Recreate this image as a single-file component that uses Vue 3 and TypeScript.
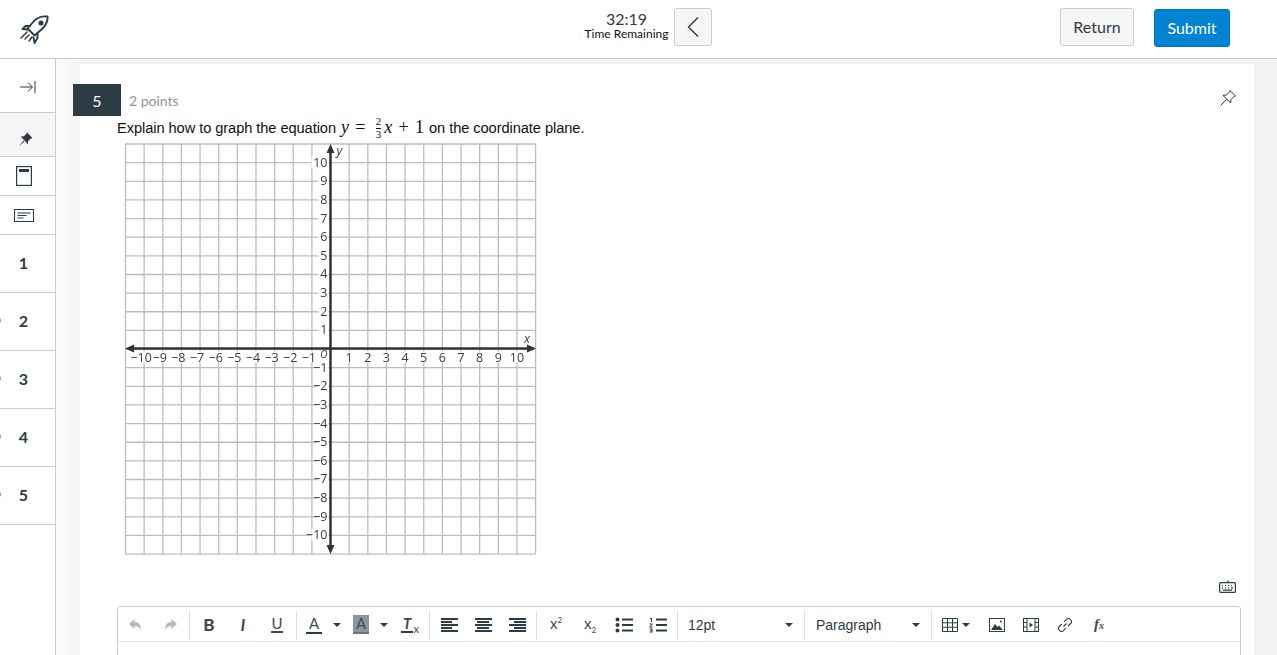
<script setup lang="ts">
const questions = [1, 2, 3, 4, 5]

// graph paper
const cell = 18.64
const cx = 205.5
const cy = 204.5
const steps = Array.from({ length: 23 }, (_, i) => i * cell)
const xLabels = [-10, -9, -8, -7, -6, -5, -4, -3, -2, -1, 1, 2, 3, 4, 5, 6, 7, 8, 9, 10]
const yLabels = [10, 9, 8, 7, 6, 5, 4, 3, 2, 1, -1, -2, -3, -4, -5, -6, -7, -8, -9, -10]
const label = (n: number) => (n < 0 ? `\u2212${-n}` : `${n}`)
</script>

<template>
  <div class="page">
    <header class="topbar">
      <svg class="rocket" width="30" height="30" viewBox="0 0 30 30" fill="none" stroke="#2d3b45" stroke-width="1.9" stroke-linejoin="round" stroke-linecap="round">
        <path d="M28.500 1.500c-5-.6-10 1-13.500 4.500L8.500 13.500l7 7 7.500-6.500c3.500-3.500 6-8.500 5.500-12.500z" />
        <path d="M11 11H6.500L3.500 14l5 .5M18.500 18.500V23l-3 5-1-5.500" />
        <circle cx="22" cy="8" r="1.600" fill="#2d3b45" />
        <path d="M8 17l-6 6M10 20l-4 4M13 22l-3 4" stroke-width="1.500" />
      </svg>
      <div class="timer">
        <div class="timer-text">
          <div class="clock">32:19</div>
          <div class="clock-label">Time Remaining</div>
        </div>
        <button class="btn chevron">
          <svg width="14" height="22" viewBox="0 0 14 22" fill="none" stroke="#2d3b45" stroke-width="1.400"><path d="M12 1.500 2.500 11 12 20.500" /></svg>
        </button>
      </div>
      <div class="actions">
        <button class="btn return">Return</button>
        <button class="btn submit">Submit</button>
      </div>
    </header>

    <div class="body">
      <aside class="sidebar">
        <div class="side-row collapse">
          <svg width="16" height="12" viewBox="0 0 16 12" fill="none" stroke="#2d3b45" stroke-width="1"><path d="M0 6h12M8 1.500 12.500 6 8 10.500M15 0v12" /></svg>
        </div>
        <div class="side-row pinned">
          <svg width="15" height="15" viewBox="0 0 14 14" fill="#2d3b45"><path d="M8.500 .5 13.500 5.500l-1.500.5-2.500 2.500-.3 3L2.500 4.300l3-.3L8 1.500zM5.200 8 1 13l5-4.200z" /></svg>
        </div>
        <div class="side-row icon-row first">
          <svg width="16" height="20" viewBox="0 0 16 20" fill="none" stroke="#2d3b45" stroke-width="1.200"><rect x=".6" y=".6" width="14.800" height="18.800" /><rect x="3" y="3" width="10" height="3" fill="#2d3b45" stroke="none" /></svg>
        </div>
        <div class="side-row icon-row">
          <svg width="20" height="13" viewBox="0 0 20 13" fill="none" stroke="#2d3b45" stroke-width="1"><rect x=".5" y=".5" width="19" height="12" /><path d="M3.500 4h13M3.500 6.500h9M3.500 9h6" /></svg>
        </div>
        <div v-for="q in questions" :key="q" class="side-row num">
          <i v-if="q > 1" class="dot"></i>
          {{ q }}
        </div>
      </aside>

      <main class="main">
        <section class="card">
          <div class="card-head">
            <div class="badge">5</div>
            <span class="points">2 points</span>
            <svg class="pin" width="18" height="18" viewBox="0 0 18 18" fill="none" stroke="#2d3b45" stroke-width="1"><path d="M11 1.500 16.500 7l-1.500.5-3 3-.3 3.500L4 6.300l3.500-.3 3-3zM7.500 10.500 1.500 16.500" /></svg>
          </div>

          <p class="question">
            Explain how to graph the equation
            <span class="math"><i>y</i> = <span class="frac"><span>2</span><span>3</span></span><i>x</i> + 1</span>
            on the coordinate plane.
          </p>

          <svg class="graph" width="412" height="411" viewBox="0 0 412 411">
            <g stroke="#bdbdbd" stroke-width="1.300">
              <line v-for="s in steps" :key="'v' + s" :x1="s + .5" y1="0" :x2="s + .5" y2="410" />
              <line v-for="s in steps" :key="'h' + s" x1="0" :y1="s" x2="410.500" :y2="s" />
            </g>
            <g class="labels">
              <template v-for="n in xLabels" :key="'x' + n">
                <rect :x="cx + n * cell - (n < 0 ? 11 : 6)" :y="cy + 3" :width="n === 10 || n < -9 ? 22 : 15" height="11" fill="#fff" />
                <text :x="cx + n * cell - (n < 0 ? 3 : 0)" :y="cy + 13" text-anchor="middle">{{ label(n) }}</text>
              </template>
              <template v-for="n in yLabels" :key="'y' + n">
                <rect :x="cx - (Math.abs(n) === 10 ? 19 : 12)" :y="cy - n * cell - 6" :width="Math.abs(n) === 10 ? 17 : 10" height="12" fill="#fff" />
                <text :x="cx - 3" :y="cy - n * cell + 4.5" text-anchor="end">{{ label(n) }}</text>
              </template>
              <text class="var origin" :x="cx - 3" :y="cy + 9" text-anchor="end">O</text>
              <text class="var" :x="cx + 6" y="10.500">y</text>
              <text class="var" x="399" :y="cy - 6">x</text>
            </g>
            <g stroke="#333" stroke-width="2.500">
              <line :x1="cx" y1="4" :x2="cx" y2="406" />
              <line x1="4" :y1="cy" x2="407" :y2="cy" />
            </g>
            <g fill="#333">
              <path :d="`M${cx} 0l-4 9h8z`" />
              <path :d="`M${cx} 410l-4-9h8z`" />
              <path :d="`M0 ${cy}l9-4v8z`" />
              <path :d="`M411 ${cy}l-9-4v8z`" />
            </g>
          </svg>

          <div class="kbd-row">
            <svg width="17" height="13" viewBox="0 0 17 13" fill="none" stroke="#2d3b45" stroke-width="1.200"><rect x=".6" y="2.600" width="15.800" height="9.800" rx="1" /><path d="M9 2.500V.5M3 5.500h1M6 5.500h1M9 5.500h1M12 5.500h1M3 7.800h1M6 7.800h1M9 7.800h1M12 7.800h2M4 10.200h9" /></svg>
          </div>

          <div class="editor">
            <div class="toolbar">
              <div class="group first">
                <span class="tb">
                  <svg width="16" height="14" viewBox="0 0 16 14" fill="#b5b9bc"><path d="M6.500 1 1 6l5.500 5V8c3 0 5 1 6.500 4 0-5-2-8-6.500-8z" /></svg>
                </span>
                <span class="tb">
                  <svg width="16" height="14" viewBox="0 0 16 14" fill="#b5b9bc"><path d="M9.500 1 15 6l-5.500 5V8c-3 0-5 1-6.500 4 0-5 2-8 6.500-8z" /></svg>
                </span>
              </div>
              <div class="group">
                <span class="tb glyph bold">B</span>
                <span class="tb glyph ital">I</span>
                <span class="tb glyph under"><span>U</span></span>
              </div>
              <div class="group">
                <span class="tb wide"><span class="glyph under-a">A</span><i class="caret"></i></span>
                <span class="tb wide"><span class="glyph under-a filled">A</span><i class="caret"></i></span>
                <span class="tb clear"><span class="glyph ital under-t">T</span><small>x</small></span>
              </div>
              <div class="group">
                <span class="tb" v-for="a in ['left', 'center', 'right']" :key="a">
                  <span class="align" :class="a"><i></i><i></i><i></i><i></i><i></i></span>
                </span>
              </div>
              <div class="group">
                <span class="tb script"><span>x<sup>2</sup></span></span>
                <span class="tb script"><span>x<sub>2</sub></span></span>
                <span class="tb">
                  <svg width="18" height="16" viewBox="0 0 18 16" fill="#2d3b45"><circle cx="2.500" cy="2.500" r="2" /><circle cx="2.500" cy="8" r="2" /><circle cx="2.500" cy="13.500" r="2" /><path d="M7 1.500h11v2H7zM7 7h11v2H7zM7 12.500h11v2H7z" /></svg>
                </span>
                <span class="tb">
                  <svg width="18" height="16" viewBox="0 0 18 16" fill="#2d3b45" stroke="none"><path d="M7 1.500h11v2H7zM7 7h11v2H7zM7 12.500h11v2H7z" /><path d="M1 1h2v4H2V2H1zM.5 6.500h3v1l-2 2h2v1h-3v-1l2-2h-2zM.5 11.500h3v4h-3v-1h2v-.6h-1v-.8h1v-.6h-2z" /></svg>
                </span>
              </div>
              <div class="group select">12pt<i class="caret"></i></div>
              <div class="group select para">Paragraph<i class="caret"></i></div>
              <div class="group last">
                <span class="tb table">
                  <svg width="16" height="14" viewBox="0 0 16 14" fill="none" stroke="#2d3b45" stroke-width="1"><path d="M.5.500h15v13H.5zM.5 4.800h15M.5 9.200h15M5.500.5v13M10.500.5v13" /></svg>
                  <i class="caret"></i>
                </span>
                <span class="tb">
                  <svg width="16" height="14" viewBox="0 0 16 14" fill="none" stroke="#2d3b45" stroke-width="1"><rect x=".5" y=".5" width="15" height="13" /><path d="M2 12l4-6 2.500 3L10 7.500l4 4.500z" fill="#2d3b45" stroke="none" /><circle cx="12" cy="3.500" r="1" fill="#2d3b45" stroke="none" /></svg>
                </span>
                <span class="tb">
                  <svg width="16" height="14" viewBox="0 0 16 14" fill="none" stroke="#2d3b45" stroke-width="1"><rect x=".5" y=".5" width="15" height="13" /><path d="M4 .5v13M12 .5v13M.5 4.500H4M.5 9H4M12 4.500h3.500M12 9h3.500" /><path d="M6.500 4.500 10 7l-3.500 2.500z" fill="#2d3b45" stroke="none" /></svg>
                </span>
                <span class="tb">
                  <svg width="16" height="16" viewBox="0 0 16 16" fill="none" stroke="#2d3b45" stroke-width="1.100"><path d="M6.500 9.500 9.500 6.500M7 5l2.500-2.700a2.500 2.500 0 0 1 3.700 0l.5.500a2.500 2.500 0 0 1 0 3.700L11 9M9 11l-2.500 2.700a2.500 2.500 0 0 1-3.700 0l-.5-.5a2.500 2.500 0 0 1 0-3.700L5 7" /></svg>
                </span>
                <span class="tb fx"><span>f<small>x</small></span></span>
              </div>
            </div>
          </div>
        </section>
      </main>
    </div>
  </div>
</template>

<style>
html,
body {
  margin: 0;
  overflow: hidden;
}
</style>

<style scoped>
.page {
  height: 655px;
  overflow: hidden;
  font-family: Lato, "Liberation Sans", sans-serif;
  color: #2d3b45;
}
.topbar {
  height: 58px;
  display: grid;
  grid-template-columns: 1fr auto 1fr;
  align-items: center;
  border-bottom: 1px solid #c7cdd1;
  padding: 0 47px 0 19px;
}
.rocket {
  margin-top: 2px;
}
.timer {
  display: flex;
  align-items: center;
  gap: 6px;
  margin-left: 48px;
  margin-top: -5px;
}
.timer-text {
  text-align: center;
  margin-bottom: 2px;
}
.clock {
  font-size: 16px;
  line-height: 16px;
}
.clock-label {
  font-size: 12px;
  line-height: 14px;
  color: #111;
}
.btn {
  font-family: inherit;
  font-size: 16px;
  border-radius: 3px;
  border: 1px solid #c7cdd1;
  background: #f5f5f5;
  color: #2d3b45;
  height: 38px;
  padding: 0;
}
.chevron {
  width: 38px;
  display: flex;
  align-items: center;
  justify-content: center;
}
.actions {
  display: flex;
  justify-content: flex-end;
  gap: 20px;
  margin-top: -4px;
}
.return {
  width: 74px;
}
.submit {
  width: 76px;
  margin-top: 1px;
  background: #0084d1;
  border-color: #0077bd;
  color: #fff;
}
.body {
  display: flex;
  height: 596px;
}
.sidebar {
  width: 55px;
  flex: none;
  border-right: 1px solid #c7cdd1;
  background: #fff;
}
.side-row {
  position: relative;
  display: flex;
  align-items: center;
  justify-content: center;
  border-bottom: 1px solid #c7cdd1;
  box-sizing: border-box;
}
.collapse {
  height: 54px;
  padding-top: 2px;
}
.pinned {
  height: 44px;
  background: #f5f5f5;
  padding: 10px 4px 0 0;
}
.icon-row {
  height: 39px;
  padding-right: 7px;
}
.num {
  height: 58px;
  font-weight: 700;
  font-size: 16px;
  padding: 0 8px 2px 0;
}
.dot {
  position: absolute;
  left: -4px;
  top: 25px;
  width: 5px;
  height: 5px;
  border-radius: 50%;
  background: #8b969e;
}
.main {
  flex: 1;
  min-width: 0;
  padding: 5px 23px 0 24px;
  background: linear-gradient(90deg, #fbfbfb, #f3f3f3 24px);
}
.card {
  background: #fff;
  padding-top: 20px;
  height: 620px;
  box-sizing: border-box;
}
.card-head {
  display: flex;
  align-items: center;
  height: 32px;
  position: relative;
}
.badge {
  width: 48px;
  height: 32px;
  margin-left: -7px;
  background: #2d3b45;
  color: #fff;
  font-size: 16px;
  display: flex;
  align-items: center;
  justify-content: center;
}
.points {
  margin-left: 8px;
  font-size: 14px;
  color: #8b969e;
}
.pin {
  position: absolute;
  right: 17px;
  top: 5px;
}
.question {
  margin: 0 0 0 37px;
  height: 28px;
  line-height: 22px;
  font-family: "Liberation Sans", Arial, sans-serif;
  font-size: 14.67px;
  color: #111;
  white-space: nowrap;
  letter-spacing: -0.08px;
}
.math {
  font-family: "Liberation Serif", "DejaVu Serif", serif;
  font-size: 18px;
  margin: 0 1px;
  word-spacing: 2px;
}
.frac {
  display: inline-flex;
  flex-direction: column;
  vertical-align: middle;
  text-align: center;
  font-size: 11px;
  line-height: 11px;
  margin: 0 2px 0 3px;
  padding: 0 1px;
  transform: translateY(-1px);
}
.frac span:first-child {
  border-bottom: 1px solid #111;
  padding-bottom: 1px;
}
.graph {
  display: block;
  margin-left: 45px;
  overflow: visible;
  filter: blur(0.35px);
}
.labels text {
  font-family: "Open Sans", sans-serif;
  font-size: 12.5px;
  fill: #3a3a3a;
}
.labels .var {
  font-style: italic;
}
.labels .origin {
  font-size: 10px;
}
.kbd-row {
  display: flex;
  justify-content: flex-end;
  padding: 25px 18px 0 0;
  height: 26px;
}
.editor {
  margin: 0 13px 0 37px;
  height: 60px;
  border: 1px solid #c7cdd1;
  border-radius: 3px 3px 0 0;
  box-sizing: border-box;
}
.toolbar {
  height: 33px;
  padding-top: 1px;
  display: flex;
  align-items: center;
  border-bottom: 1px solid #dfe2e4;
}
.group {
  display: flex;
  align-items: center;
  height: 30px;
  border-right: 1px solid #dfe2e4;
  padding: 0 2px;
  flex: none;
}
.group.first {
  padding: 0 2px 0 1px;
}
.group.last {
  border-right: none;
  padding: 0;
}
.tb {
  width: 34px;
  height: 28px;
  display: inline-flex;
  align-items: center;
  justify-content: center;
  flex: none;
  color: #3f4a52;
}
.glyph {
  font-family: Lato, sans-serif;
  font-size: 17px;
  line-height: 1;
}
.bold {
  font-weight: 900;
}
.ital {
  font-style: italic;
  font-weight: 700;
}
.under {
  font-size: 15px;
}
.under span {
  border-bottom: 2px solid #3f4a52;
  line-height: 15px;
}
.wide {
  width: 47px;
  justify-content: flex-start;
  padding-left: 7px;
  box-sizing: border-box;
  gap: 11px;
}
.under-a {
  width: 16px;
  text-align: center;
  font-size: 15px;
  border-bottom: 2px solid #2d3b45;
  padding-bottom: 1px;
}
.filled {
  background: #8f9499;
  border-color: #6d7277;
  padding-top: 1px;
}
.clear {
  font-size: 10px;
}
.under-t {
  border-bottom: 2px solid #2d3b45;
  font-size: 15px;
  padding: 0 2px;
}
.clear small {
  font-size: 11px;
  margin-top: 8px;
}
.align {
  width: 17px;
  display: flex;
  flex-direction: column;
  gap: 1px;
}
.align i {
  height: 2px;
  background: #2d3b45;
  width: 100%;
}
.align i:nth-child(even) {
  width: 65%;
}
.align.center {
  align-items: center;
}
.align.right {
  align-items: flex-end;
}
.script {
  font-size: 15px;
}
.script span {
  line-height: 15px;
  margin-top: -3px;
}
.script sup,
.script sub {
  font-size: 8px;
  line-height: 0;
}
.caret {
  display: inline-block;
  width: 0;
  height: 0;
  border-left: 4px solid transparent;
  border-right: 4px solid transparent;
  border-top: 4px solid #2d3b45;
  flex: none;
}
.select {
  font-family: "Liberation Sans", Arial, sans-serif;
  font-size: 14px;
  justify-content: space-between;
  padding: 0 11px 0 10px;
  box-sizing: border-box;
  width: 127px;
}
.select.para {
  padding-left: 11px;
}
.table {
  width: 48px;
  gap: 4px;
}
.fx {
  font-family: "Liberation Serif", serif;
  font-style: italic;
  font-weight: 700;
  font-size: 15px;
}
.fx small {
  font-size: 10px;
}
</style>
